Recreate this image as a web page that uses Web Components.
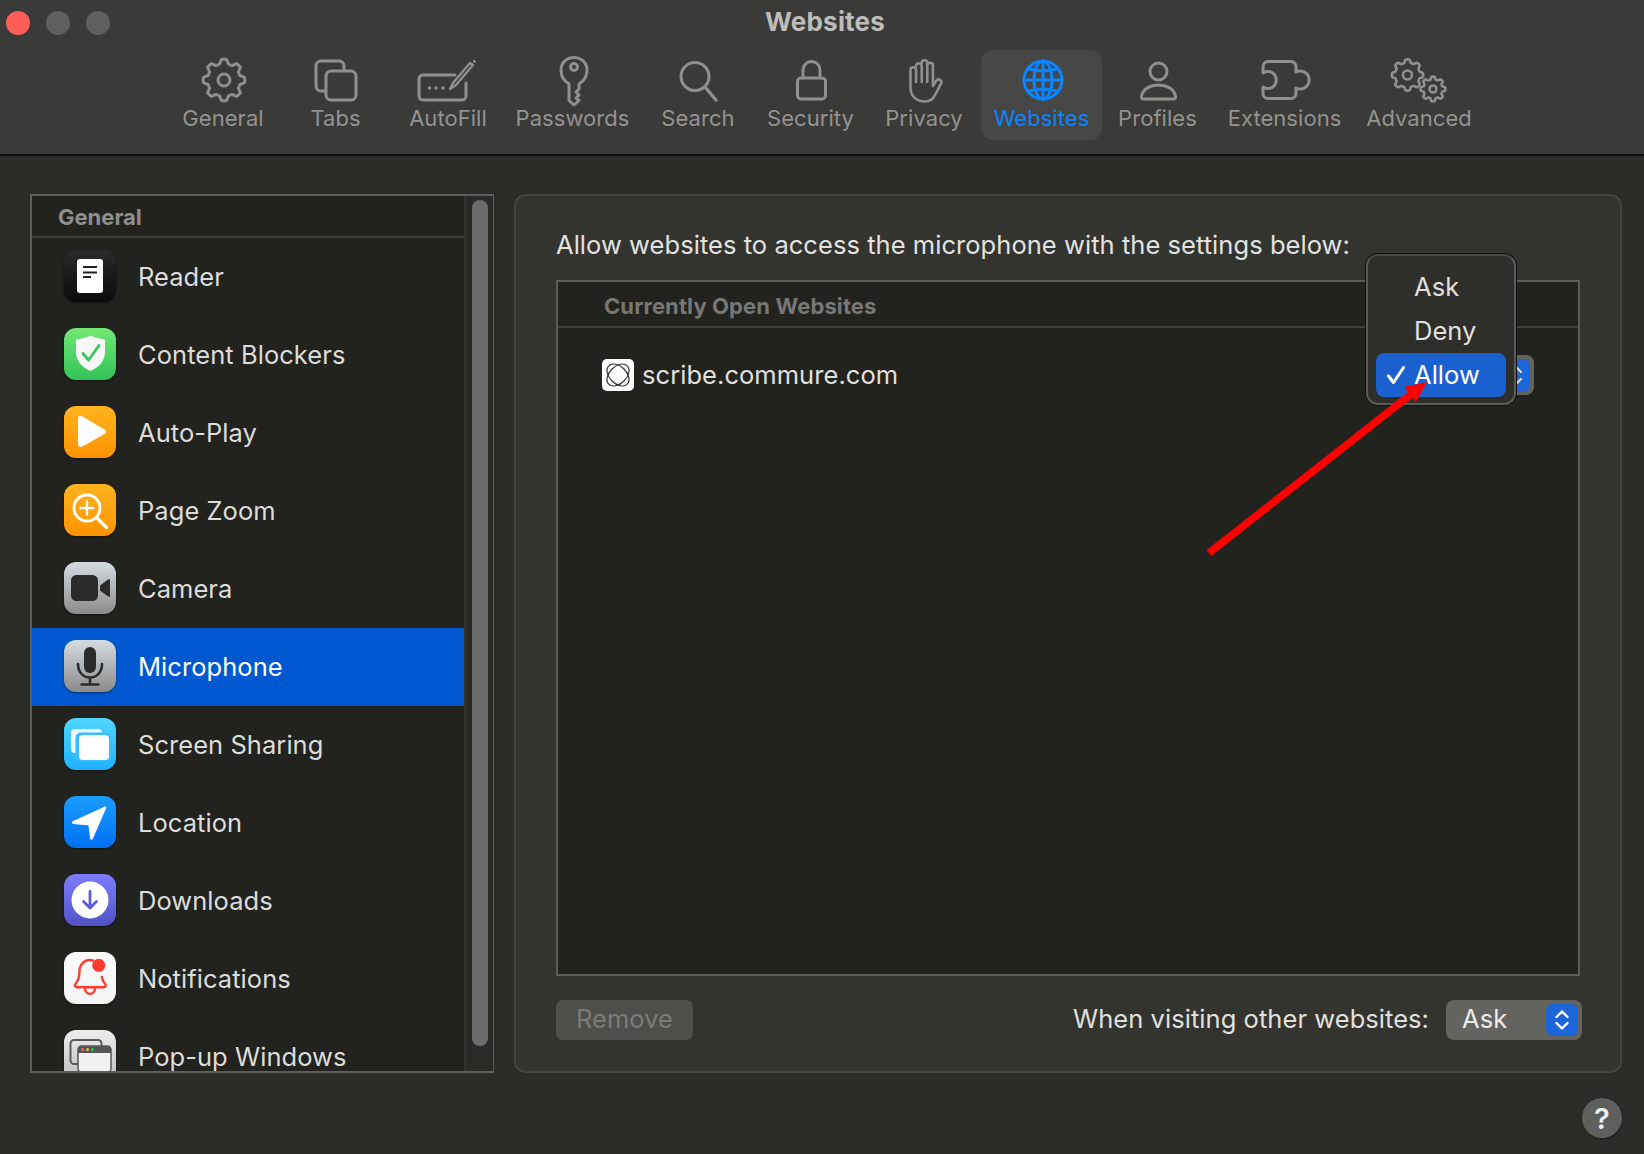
<!DOCTYPE html>
<html lang="en"><head><meta charset="utf-8"><title>Websites</title>
<style>
html,body{margin:0;padding:0;background:#2c2d29}
body{width:1644px;height:1154px;overflow:hidden;font-family:Inter,"Liberation Sans",sans-serif;color:#dedede;-webkit-font-smoothing:antialiased}
</style></head><body>
<sw-app>
  <sw-toolbar title-text="Websites">
    <sw-tool w="110" icon="general">General</sw-tool>
    <sw-tool w="115" icon="tabs">Tabs</sw-tool>
    <sw-tool w="110" icon="autofill">AutoFill</sw-tool>
    <sw-tool w="139" icon="key">Passwords</sw-tool>
    <sw-tool w="112" icon="search">Search</sw-tool>
    <sw-tool w="113" icon="lock">Security</sw-tool>
    <sw-tool w="114" icon="hand">Privacy</sw-tool>
    <sw-tool w="121" icon="globe" active>Websites</sw-tool>
    <sw-tool w="111" icon="person">Profiles</sw-tool>
    <sw-tool w="143" icon="puzzle">Extensions</sw-tool>
    <sw-tool w="126" icon="gears">Advanced</sw-tool>
  </sw-toolbar>
  <sw-main>
    <sw-sidebar heading="General">
      <sw-row icon="reader">Reader</sw-row>
      <sw-row icon="shield">Content Blockers</sw-row>
      <sw-row icon="play">Auto-Play</sw-row>
      <sw-row icon="zoom">Page Zoom</sw-row>
      <sw-row icon="camera">Camera</sw-row>
      <sw-row icon="mic" selected>Microphone</sw-row>
      <sw-row icon="screen">Screen Sharing</sw-row>
      <sw-row icon="location">Location</sw-row>
      <sw-row icon="download">Downloads</sw-row>
      <sw-row icon="bell">Notifications</sw-row>
      <sw-row icon="popup">Pop-up Windows</sw-row>
    </sw-sidebar>
    <sw-panel>
      <span slot="intro">Allow websites to access the microphone with the settings below:</span>
      <sw-table heading="Currently Open Websites">
        <sw-site name="scribe.commure.com"></sw-site>
      </sw-table>
      <sw-footer slot="footer"></sw-footer>
    </sw-panel>
  </sw-main>
  <sw-help>?</sw-help>
  <sw-arrow></sw-arrow>
</sw-app>
<script>
const FS=25.5, LS=0.05;
function gear(cx,cy,R,A,n,rot=0){let d='';for(let i=0;i<=180;i++){const t=i/180*Math.PI*2;
  const c=Math.cos(n*t+rot);const k=Math.max(-1,Math.min(1,c*1.8));
  const r=R+A*k;d+=(i?'L':'M')+(cx+r*Math.sin(t)).toFixed(2)+' '+(cy-r*Math.cos(t)).toFixed(2);}return d+'Z';}
const TOOL={
 general:`<path d="${gear(33,24,18.6,2.2,8)}"/><circle cx="33" cy="24" r="6"/>`,
 tabs:`<path d="M21 35h-4a5 5 0 0 1-5-5V10a5 5 0 0 1 5-5h18a5 5 0 0 1 5 5v5"/><rect x="22" y="15" width="30" height="29" rx="5"/>`,
 autofill:`<path d="M39 19H7a4 4 0 0 0-4 4v17a4 4 0 0 0 4 4h39a4 4 0 0 0 4-4V27"/><path d="M34 33l3-6 17-20 3 2-17 20z" stroke-width="2.4"/><circle cx="13.5" cy="32" r="1.8" fill="#8f8f8d" stroke="none"/><circle cx="20" cy="32" r="1.8" fill="#8f8f8d" stroke="none"/><circle cx="27" cy="32" r="1.8" fill="#8f8f8d" stroke="none"/><circle cx="58.5" cy="5.5" r="1.4" fill="#8f8f8d" stroke="none"/>`,
 key:`<path d="M28 28C23 25 20 20 20 14 20 6.500 26 1.500 33 1.500S46 6.500 46 14C46 20 43 25 38 28V33L35 36 38 39 35 42 38 44.500 33 49 28 44.500Z"/><ellipse cx="33" cy="11" rx="3.500" ry="3.500"/>`,
 search:`<circle cx="29" cy="20.500" r="14"/><path d="M39 31l11 13" stroke-width="3.400"/>`,
 lock:`<rect x="18.500" y="22" width="28" height="21" rx="3.500"/><path d="M24 22V14a8.500 8.500 0 0 1 17 0v8"/>`,
 hand:`<g stroke-width="2.600"><path d="M18.500 14a2.800 2.800 0 0 1 5.600 0v12M24.100 10a2.800 2.800 0 0 1 5.600 0v16M29.700 7a2.800 2.800 0 0 1 5.600 0v19M35.300 9.500a2.800 2.800 0 0 1 5.600 0V30l3.500-5.500a2.800 2.800 0 0 1 4.800 2.800L43 39c-2 4.500-5.500 6.500-10 6.500-9 0-14.500-5.500-14.500-14V14"/></g>`,
 globe:`<g stroke="#0a84ff"><circle cx="33" cy="24" r="19"/><ellipse cx="33" cy="24" rx="9" ry="19"/><path d="M33 5v38M14 24h38M18 12.500c9 3 21 3 30 0M18 35.500c9-3 21-3 30 0"/></g>`,
 person:`<circle cx="32.500" cy="15.500" r="8.500"/><path d="M18 43c-2 0-3-1-2.500-3C17 33 24 29 32.500 29S48 33 49.500 40c.5 2-.5 3-2.500 3Z"/>`,
 puzzle:`<path d="M15 5.500H38a5 5 0 0 1 5 5V16a9 9 0 1 1 0 16V37.500a5 5 0 0 1-5 5H15a5 5 0 0 1-5-5V31a8.500 8.500 0 1 0 0-14V10.500a5 5 0 0 1 5-5Z"/>`,
 gears:`<path d="${gear(20.5,19,14,1.6,8)}" stroke-width="2.600"/><circle cx="20.500" cy="19" r="4.500" stroke-width="2.600"/><path d="${gear(46,33,11,1.400,8)}" stroke-width="2.600"/><circle cx="46" cy="33" r="3.500" stroke-width="2.600"/>`
};
const APP={
 reader:['#2a2a2a','#0b0b0b',`<rect x="13" y="9" width="26" height="34" rx="3" fill="#fff"/><path d="M19 17h14M19 22.500h14M19 27h8" stroke="#222" stroke-width="1.800"/>`],
 shield:['#72e772','#33c35a',`<path d="M26.500 7.500C31 9.500 36 11 41 11.500V24C41 33 35 39.500 26.500 43 18 39.500 12 33 12 24V11.500C17 11 22 9.500 26.500 7.500Z" fill="#f7f7f7"/><path d="M19 25.500l5.500 6.500L35 17.500" fill="none" stroke="#34c759" stroke-width="2.800" stroke-linecap="round" stroke-linejoin="round"/>`],
 play:['#ffb320','#ff9300',`<path d="M14 13c0-3 2-4 4.500-2.500l22 13c2 1.300 2 3.200 0 4.500l-22 12.500C16 41.500 14 40.500 14 38Z" fill="#fff"/>`],
 zoom:['#ffb320','#ff9300',`<circle cx="23" cy="24" r="13" fill="none" stroke="#fff" stroke-width="2.800"/><path d="M33 34l9.500 9.500" stroke="#fff" stroke-width="3.200" stroke-linecap="round"/><path d="M23 17.500v13M16.500 24h13" stroke="#fff" stroke-width="2.400" stroke-linecap="round"/>`],
 camera:['#d5dce0','#8b8b8b',`<rect x="7" y="13" width="27" height="26" rx="5.500" fill="#2b2b2b"/><path d="M36 23.500l8-6c1-.7 2-.2 2 1V33.500c0 1.200-1 1.700-2 1l-8-6Z" fill="#2b2b2b"/>`],
 mic:['#d5dce0','#8b8b8b',`<rect x="20" y="7" width="12" height="26" rx="6" fill="#2b2b2b"/><path d="M14 24c0 8 5 13.500 12 13.500S38 32 38 24M26 37.500V44M17.500 44.500h17" fill="none" stroke="#2b2b2b" stroke-width="2.600" stroke-linecap="round"/>`],
 screen:['#4fd6ff','#1fb0ff',`<rect x="7" y="11" width="31" height="24" rx="4" fill="#fff" opacity=".9"/><rect x="11.500" y="14.500" width="35" height="29" rx="5" fill="#35bfff"/><rect x="15" y="17" width="30" height="25" rx="4" fill="#fff"/>`],
 location:['#1a9dff','#0070f5',`<path d="M41 10.500c1-.4 1.700.3 1.300 1.300L29 42.500c-.8 1.800-2.800 1.500-3-.3L24.500 29.500 9.500 28c-2-.2-2.200-2.300-.3-3Z" fill="#fff"/>`],
 download:['#7d7dff','#5252c6',`<circle cx="26" cy="26" r="18.500" fill="#fff"/><path d="M26 17.500v16M19.500 27.500l6.500 6.500 6.500-6.500" fill="none" stroke="#5c5cdb" stroke-width="2.800" stroke-linecap="round" stroke-linejoin="round"/>`],
 bell:['#fbfbfb','#f4f4f4',`<path d="M29 8.500c-7-2-13.500 3-13.500 10.500 0 8-2 10.500-4 13-1.200 1.500-.6 3.200 1.300 3.200h27c2 0 2.600-1.700 1.300-3.200-1.500-1.800-2.800-3.500-3.300-7M21 36c0 3.500 2.300 6 5 6s5-2.500 5-6" fill="none" stroke="#ff3b30" stroke-width="2.400" stroke-linecap="round"/><circle cx="34.700" cy="13.300" r="6.500" fill="#ff3b30"/>`],
 popup:['#ededed','#bdbdbd',`<rect x="6.500" y="10" width="31" height="24" rx="3.500" fill="none" stroke="#5a5a5a" stroke-width="2"/><rect x="14" y="16" width="33" height="26" rx="3.500" fill="#f1f1f1" stroke="#555" stroke-width="1.500"/><path d="M14 23v-3.500a3.500 3.500 0 0 1 3.500-3.500h26a3.500 3.500 0 0 1 3.500 3.500V23Z" fill="#555"/><circle cx="18.500" cy="19.500" r="1.500" fill="#ff5f57"/><circle cx="23.500" cy="19.500" r="1.500" fill="#febc2e"/><circle cx="28.500" cy="19.500" r="1.500" fill="#28c840"/>`]
};
function def(name,css,html,init){customElements.define(name,class extends HTMLElement{connectedCallback(){
  if(this.shadowRoot)return;const r=this.attachShadow({mode:'open'});
  r.innerHTML=`<style>${css}</style>`+(typeof html==='function'?html(this):html);if(init)init(this,r);}});}
def('sw-app',`:host{display:block;position:relative;width:1644px;height:1154px}`,`<slot></slot>`);
def('sw-toolbar',`:host{display:block;height:154px;background:#3a3a38;border-bottom:2px solid #0d0d0d;box-sizing:content-box}
 .bar{display:grid;grid-template-columns:1fr auto 1fr;align-items:center;height:42px;padding:2px 0 0 6px;box-sizing:content-box}
 .lights{display:flex;gap:16px;margin-top:-1px}.lights i{width:24px;height:24px;border-radius:50%;background:#5f5f5d}.lights i:first-child{background:#ff5f57}
 .t{font-weight:700;font-size:26px;letter-spacing:.2px;color:#bdbdbb;margin-top:-3px}
 .row{display:flex;padding:6px 0 0 168px}`,
 h=>`<div class="bar"><div class="lights"><i></i><i></i><i></i></div><div class="t">${h.getAttribute('title-text')}</div><span></span></div><div class="row"><slot></slot></div>`);
def('sw-tool',`:host{display:flex;flex-direction:column;align-items:center;height:90px;box-sizing:border-box;padding-top:6px;border-radius:12px;color:#939391;font-size:22px;letter-spacing:.05px;line-height:30px}
 :host([active]){background:#464644;color:#0a84ff}
 svg{width:64px;height:50px;display:block;overflow:visible;flex:none}
 span{display:block;margin-top:-3px;white-space:nowrap}`,
 h=>{h.style.width=h.getAttribute('w')+'px';return `<svg viewBox="0 0 64 50" fill="none" stroke="#8f8f8d" stroke-width="3" stroke-linecap="round" stroke-linejoin="round">${TOOL[h.getAttribute('icon')]}</svg><span><slot></slot></span>`});
def('sw-main',`:host{display:flex;gap:21px;padding:38px 0 0 30px;height:879px}`,`<slot></slot>`);
def('sw-sidebar',`:host{display:grid;grid-template-columns:432px 1fr;width:464px;height:879px;box-sizing:border-box;border:2px solid #5f605b;background:#22231f;flex:none;margin-right:-1px}
 .list{display:flex;flex-direction:column;overflow:hidden;border-right:0}
 .h{height:42px;flex:none;box-sizing:border-box;padding:7px 0 0 26px;font-weight:700;font-size:22px;line-height:28px;color:#8f8f8c;border-bottom:2px solid #3d3e3a}
 .track{border-left:2px solid #32332f;position:relative;padding:4px 5px 0 6px;background:#2a2b27}
 .thumb{width:16px;height:846px;border-radius:8px;background:#6c6c6a}`,
 h=>`<div class="list"><div class="h">${h.getAttribute('heading')}</div><slot></slot></div><div class="track"><div class="thumb"></div></div>`);
def('sw-row',`:host{display:flex;align-items:center;flex:none;height:78px;box-sizing:border-box;padding:0 0 2px 32px;gap:22px;font-size:${FS}px;letter-spacing:${LS}px;color:#dcdcda}
 :host([selected]){background:#0058d0;color:#fff}
 svg{width:52px;height:52px;flex:none;overflow:visible;filter:drop-shadow(0 1px 1px rgba(0,0,0,.45))}`,
 h=>{const a=APP[h.getAttribute('icon')],id='g'+h.getAttribute('icon');return `<svg viewBox="0 0 52 52"><defs><linearGradient id="${id}" x1="0" y1="0" x2="0" y2="1"><stop offset="0" stop-color="${a[0]}"/><stop offset="1" stop-color="${a[1]}"/></linearGradient></defs><rect width="52" height="52" rx="12" fill="url(#${id})"/>${a[2]}</svg><slot></slot>`});
def('sw-panel',`:host{display:flex;flex-direction:column;flex:none;width:1108px;height:879px;box-sizing:border-box;border:2px solid #444540;border-radius:12px;background:#33342f;padding:34px 40px 31px 40px}
 .i{height:30px;line-height:30px;font-size:${FS}px;letter-spacing:${LS}px;color:#e2e2e0;margin-bottom:20px;white-space:nowrap}`,
 `<div class="i"><slot name="intro"></slot></div><slot></slot><slot name="footer"></slot>`);
def('sw-table',`:host{display:block;flex:1;box-sizing:border-box;border:2px solid #5d5e59;background:#22231f}
 .h{height:46px;box-sizing:border-box;padding:10px 0 0 46px;font-weight:700;font-size:22px;letter-spacing:.1px;line-height:28px;color:#777775;border-bottom:2px solid #3f403c}`,
 h=>`<div class="h">${h.getAttribute('heading')}</div><slot></slot>`);
def('sw-site',`:host{display:flex;align-items:center;height:94px;box-sizing:border-box;padding:0 44px 0 44px;gap:8px;font-size:${FS}px;letter-spacing:${LS}px;color:#e0e0de}
 svg{width:32px;height:32px;flex:none}
 span{margin-bottom:2px}
 sw-select{margin-left:auto}`,
 h=>`<svg viewBox="0 0 32 32"><rect width="32" height="32" rx="5" fill="#fff"/><ellipse cx="16" cy="16" rx="13" ry="8.500" transform="rotate(45 16 16)" fill="none" stroke="#333" stroke-width="1.200"/><ellipse cx="16" cy="16" rx="13" ry="8.500" transform="rotate(-45 16 16)" fill="none" stroke="#333" stroke-width="1.200"/></svg><span>${h.getAttribute('name')}</span><sw-select></sw-select>`);
def('sw-select',`:host{display:block;position:relative;width:134px;height:40px;box-sizing:border-box;border-radius:8px;background:#63645f}
 .st{position:absolute;right:4px;top:4px;width:28px;height:33px;border-radius:6px;background:#1c66da}
 .st svg{position:absolute;left:0;top:0;width:28px;height:33px}`,
 `<div class="st"><svg viewBox="0 0 28 33" fill="none" stroke="#ddd" stroke-width="2.200" stroke-linecap="round" stroke-linejoin="round"><path d="M9 13l5-5 5 5M9 20l5 5 5-5"/></svg></div><sw-menu></sw-menu>`);
def('sw-menu',`:host{display:block;position:absolute;left:-34px;top:-101px;width:150px;height:151px;box-sizing:border-box;padding:9px 8px 0;border:2px solid #5b5b58;border-top-color:#484845;border-radius:12px;background:#2e2f2b;box-shadow:0 0 0 1px #111;font-size:${FS}px;letter-spacing:${LS}px;color:#e0e0de}
 div{height:44px;line-height:44px;padding-left:38px;border-radius:8px;position:relative}
 .on{background:#1a60cf;color:#fff}
 svg{position:absolute;left:11px;top:13px;width:18px;height:18px}`,
 `<div>Ask</div><div>Deny</div><div class="on"><svg viewBox="0 0 18 18" fill="none" stroke="#fff" stroke-width="3" stroke-linecap="round" stroke-linejoin="round"><path d="M1.500 10l5 6.500L16.500 1.500"/></svg>Allow</div>`);
def('sw-footer',`:host{display:flex;align-items:center;height:40px;margin:24px -2px 0 0;font-size:${FS}px;letter-spacing:${LS}px;color:#e0e0de}
 .rm{width:137px;height:40px;line-height:38px;border-radius:7px;background:#4e4f4a;color:#7c7c79;text-align:center}
 .l{margin-left:auto;margin-right:17px;line-height:38px;height:40px}
 .s{width:136px;height:40px;line-height:38px;box-sizing:border-box;padding-left:16px;border-radius:8px;background:#63645f;position:relative;color:#ececea}
 .b{position:absolute;right:4px;top:4px;width:32px;height:32px;border-radius:7px;background:#1c66da}
 .b svg{display:block;width:32px;height:32px}`,
 `<div class="rm">Remove</div><div class="l">When visiting other websites:</div><div class="s">Ask<div class="b"><svg viewBox="0 0 32 32" fill="none" stroke="#fff" stroke-width="2.400" stroke-linecap="round" stroke-linejoin="round"><path d="M10.500 13l5.500-5.500 5.500 5.500M10.500 19l5.500 5.500 5.500-5.500"/></svg></div></div>`);
def('sw-help',`:host{display:flex;align-items:center;justify-content:center;width:40px;height:40px;margin:25px 0 0 1582px;border-radius:50%;background:#5f5f5d;color:#eee;font-weight:600;font-size:29px;box-shadow:0 1px 2px rgba(0,0,0,.4)}`,`<slot></slot>`);
def('sw-arrow',`:host{display:block;position:absolute;left:0;top:0;width:1644px;height:1154px;pointer-events:none}svg{display:block;width:100%;height:100%}`,
 `<svg viewBox="0 0 1644 1154"><path d="M1209 553L1414 392" stroke="#ff0000" stroke-width="7.500"/><path d="M1427 382L1404 387L1416 402Z" fill="#ff0000"/></svg>`);
</script>
</body></html>
